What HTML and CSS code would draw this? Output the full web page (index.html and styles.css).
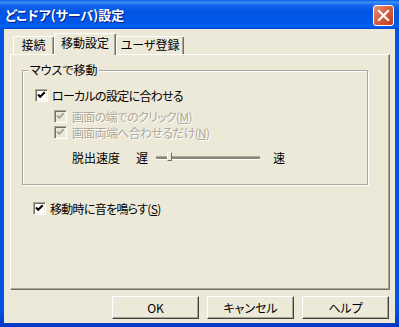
FILE: index.html
```html
<!DOCTYPE html>
<html lang="ja">
<head>
  <meta charset="UTF-8">
  <title>どこドア(サーバ)設定</title>
  <link rel="stylesheet" href="styles.css">
</head>
<body>
  <div class="ventana">
    <div class="barra-titulo">
      <span class="titulo-texto">どこドア(サーバ)設定</span>
      <span class="cerrar">
        <svg width="13" height="13" viewBox="0 0 13 13">
          <path d="M2 2 L11 11 M11 2 L2 11" stroke="#fff" stroke-width="2.2" stroke-linecap="square"/>
        </svg>
      </span>
    </div>

    <div class="cliente">
      <div class="pestanas">
        <div class="pestana p1">接続</div>
        <div class="pestana activa p2">移動設定</div>
        <div class="pestana p3">ユーザ登録</div>
      </div>

      <div class="panel">
        <div class="grupo">
          <div class="grupo-titulo">マウスで移動</div>

          <div class="fila f1">
            <span class="cb"><svg width="11" height="11" viewBox="0 0 11 11"><path d="M2 4.5 L4.2 6.8 L8.8 2.2" class="check"/></svg></span>
            <span class="etiqueta">ローカルの設定に合わせる</span>
          </div>

          <div class="fila f2 deshab">
            <span class="cb"><svg width="11" height="11" viewBox="0 0 11 11"><path d="M2 4.5 L4.2 6.8 L8.8 2.2" class="check"/></svg></span>
            <span class="etiqueta">画面の端でのクリック(<u>M</u>)</span>
          </div>

          <div class="fila f3 deshab">
            <span class="cb"><svg width="11" height="11" viewBox="0 0 11 11"><path d="M2 4.5 L4.2 6.8 L8.8 2.2" class="check"/></svg></span>
            <span class="etiqueta">画面両端へ合わせるだけ(<u>N</u>)</span>
          </div>

          <div class="fila f4">
            <span class="velocidad">脱出速度</span>
            <span class="lento">遅</span>
            <div class="deslizador">
              <div class="riel"></div>
              <div class="cursor"></div>
            </div>
            <span class="rapido">速</span>
          </div>
        </div>

        <div class="fila f5">
          <span class="cb"><svg width="11" height="11" viewBox="0 0 11 11"><path d="M2 4.5 L4.2 6.8 L8.8 2.2" class="check"/></svg></span>
          <span class="etiqueta">移動時に音を鳴らす(<u>S</u>)</span>
        </div>
      </div>

      <div class="botones">
        <button>OK</button>
        <button>キャンセル</button>
        <button>ヘルプ</button>
      </div>
    </div>
  </div>
</body>
</html>
```

FILE: styles.css
```css
body {
  margin: 0;
  padding: 0;
  background-color: #fff;
  font-family: "Noto Sans CJK JP", "Noto Sans", sans-serif;
  font-size: 12px;
  font-feature-settings: "palt";
}

.ventana {
  width: 399px;
  height: 327px;
  display: flex;
  flex-direction: column;
  background: linear-gradient(to bottom, #0054e3 0%, #0054e3 95%, #0038c0 100%);
  box-sizing: border-box;
}

/* barra de titulo estilo XP */
.barra-titulo {
  height: 29px;
  flex: none;
  display: flex;
  align-items: center;
  justify-content: space-between;
  padding: 1px 5px 0 5px;
  box-sizing: border-box;
  background: linear-gradient(to bottom, #0a5fe9 0%, #3d8ff7 8%, #1466f0 18%, #0054e3 40%, #0058ea 80%, #0063f5 90%, #0048d6 100%);
}

.titulo-texto {
  color: #fff;
  font-weight: bold;
  font-size: 13px;
  line-height: 16px;
  text-shadow: 1px 1px 0 #0a1e8a;
}

.cerrar {
  width: 21px;
  height: 21px;
  box-sizing: border-box;
  border: 1px solid #fff;
  border-radius: 3px;
  background: linear-gradient(to bottom right, #e8937a 0%, #d7603f 45%, #c23c1c 100%);
  display: flex;
  align-items: center;
  justify-content: center;
}

.cliente {
  flex: 1;
  margin: 0 4px 4px 4px;
  background-color: #ece9d8;
  padding: 4px 5px 0 6px;
  display: flex;
  flex-direction: column;
}

/* pestañas */
.pestanas {
  height: 21px;
  display: flex;
  align-items: flex-end;
  padding-left: 3px;
}

.pestana {
  height: 18px;
  box-sizing: border-box;
  border: 1px solid #fff;
  border-bottom: none;
  border-right-color: #716f64;
  border-radius: 2px 2px 0 0;
  box-shadow: inset -1px 0 0 #aca899;
  background-color: #ece9d8;
  text-align: center;
  line-height: 16px;
  color: #000;
}

.p1 {
  width: 41px;
}

.p2 {
  width: 62px;
}

.p3 {
  width: 68px;
}

.pestana.activa {
  height: 22px;
  margin-bottom: -1px;
  line-height: 18px;
  position: relative;
  z-index: 1;
}

.panel {
  width: 380px;
  height: 236px;
  box-sizing: border-box;
  border: 1px solid #fff;
  border-right-color: #716f64;
  border-bottom-color: #716f64;
  box-shadow: inset -1px -1px 0 #aca899;
  padding: 15px 0 0 11px;
}

/* cuadro de grupo */
.grupo {
  width: 346px;
  height: 115px;
  box-sizing: border-box;
  border: 1px solid #aca899;
  box-shadow: inset 1px 1px 0 #fff, 1px 1px 0 #fff;
  padding-left: 12px;
}

.grupo-titulo {
  width: fit-content;
  margin: -8px 0 0 -7px;
  padding: 0 2px;
  line-height: 14px;
  background-color: #ece9d8;
}

.fila {
  height: 13px;
  display: flex;
  align-items: center;
  line-height: 14px;
  white-space: nowrap;
}

.f1 {
  margin-top: 12px;
}

.f2 {
  margin-top: 8px;
  margin-left: 19px;
}

.f3 {
  margin-top: 3px;
  margin-left: 19px;
}

.f4 {
  margin-top: 12px;
  margin-left: 37px;
}

.f5 {
  margin-top: 17px;
  margin-left: 11px;
}

.cb {
  width: 13px;
  height: 13px;
  flex: none;
  box-sizing: border-box;
  border: 1px solid;
  border-color: #aca899 #fff #fff #aca899;
  box-shadow: inset 1px 1px 0 #716f64, inset -1px -1px 0 #f1efe2;
  background-color: #fff;
  display: flex;
}

.check {
  fill: none;
  stroke: #000;
  stroke-width: 2;
}

.etiqueta {
  margin-left: 4px;
  color: #000;
  letter-spacing: -0.7px;
}

.deshab .cb {
  background-color: #ece9d8;
}

.deshab .check {
  stroke: #aca899;
}

.deshab .etiqueta {
  margin-left: 5px;
  color: #aca899;
  text-shadow: 1px 1px 0 #fff;
}

/* deslizador de velocidad */
.lento {
  margin-left: 16px;
}

.deslizador {
  position: relative;
  width: 104px;
  height: 13px;
  margin-left: 8px;
  display: flex;
  align-items: center;
}

.riel {
  width: 100%;
  height: 4px;
  box-sizing: border-box;
  border-top: 1px solid #aca899;
  border-bottom: 1px solid #fff;
  background-color: #8a8778;
}

.cursor {
  position: absolute;
  left: 11px;
  top: 1px;
  width: 5px;
  height: 9px;
  box-sizing: border-box;
  border: 1px solid;
  border-color: #fff #716f64 #716f64 #fff;
  background-color: #ece9d8;
}

.rapido {
  margin-left: 13px;
}

/* botones */
.botones {
  display: flex;
  justify-content: flex-end;
  gap: 8px;
  margin-top: 6px;
  padding-right: 1px;
}

button {
  width: 87px;
  height: 23px;
  box-sizing: border-box;
  border: 1px solid;
  border-color: #fff #404040 #404040 #fff;
  box-shadow: inset -1px -1px 0 #aca899;
  background-color: #ece9d8;
  font-family: "Noto Sans CJK JP", "Noto Sans", sans-serif;
  font-size: 12px;
  font-feature-settings: "palt";
  color: #000;
  padding: 0;
  line-height: 14px;
}
```
